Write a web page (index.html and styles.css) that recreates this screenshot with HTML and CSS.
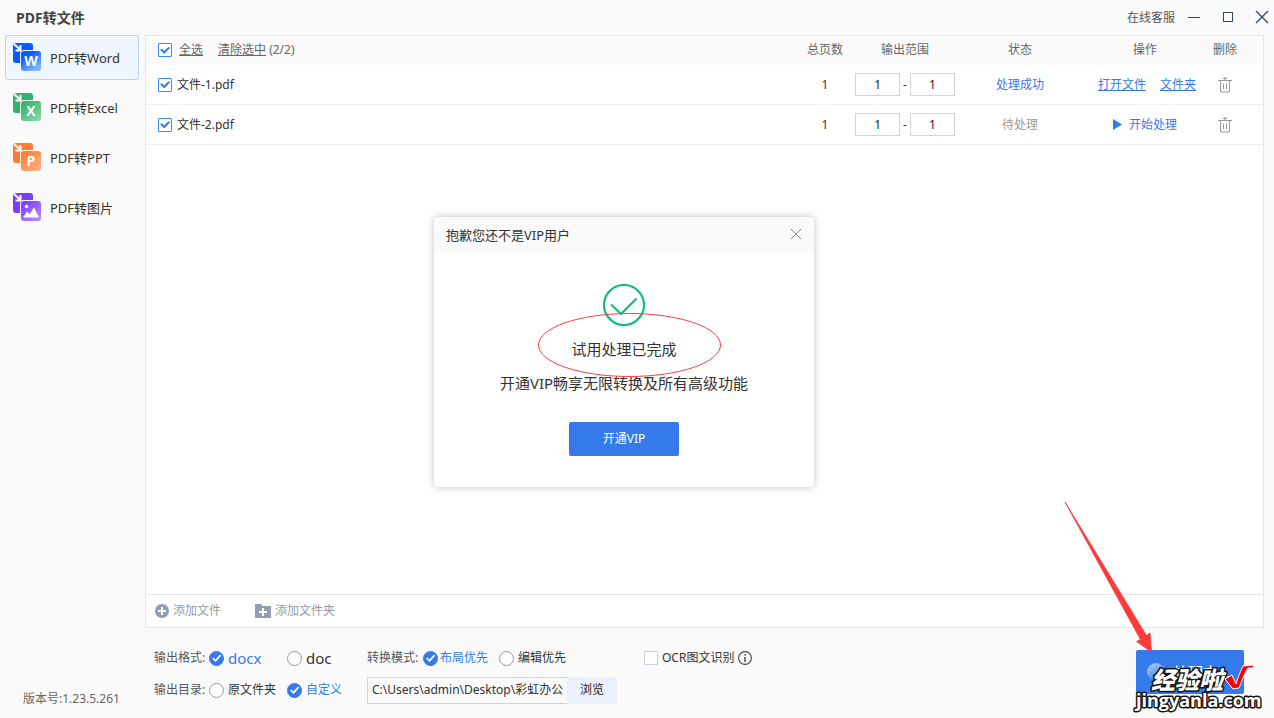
FILE: index.html
```html
<!DOCTYPE html>
<html lang="zh-CN">
<head>
<meta charset="utf-8">
<title>PDF转文件</title>
<link rel="stylesheet" href="styles.css">
</head>
<body>
<svg class="defs" width="0" height="0" aria-hidden="true">
  <defs>
    <linearGradient id="g-blue" x1="0" y1="0" x2="0.6" y2="1"><stop offset="0.3" stop-color="#0a5bff"/><stop offset="1" stop-color="#7fb2ff"/></linearGradient>
    <linearGradient id="g-green" x1="0" y1="0" x2="0.8" y2="1"><stop offset="0.1" stop-color="#2fb565"/><stop offset="1" stop-color="#86d3a4"/></linearGradient>
    <linearGradient id="g-orange" x1="0" y1="0" x2="0.8" y2="1"><stop offset="0.1" stop-color="#ff7a33"/><stop offset="1" stop-color="#ffb184"/></linearGradient>
    <linearGradient id="g-purple" x1="0" y1="0" x2="0.8" y2="1"><stop offset="0.1" stop-color="#7a3cff"/><stop offset="1" stop-color="#b48cff"/></linearGradient>
    <linearGradient id="g-spin" x1="0" y1="0" x2="0.6" y2="1"><stop offset="0" stop-color="#b8d2fb"/><stop offset="1" stop-color="#347aea"/></linearGradient>
    <symbol id="arrow-in" viewBox="0 0 28 28"><path d="M1 1l6 5.600M7.500 2v5.500H2.500" fill="none" stroke="#fff" stroke-width="2"/></symbol>
    <symbol id="trash" viewBox="0 0 14 16"><path d="M0 3.500h14M2.500 3.500v11.500h9V3.500M5.500 6.500v5.500M8.500 6.500v5.500M5 1.500h4M7 0v3" fill="none" stroke="#999" stroke-width="1"/></symbol>
  </defs>
</svg>

<header class="titlebar">
  <h1 class="titlebar-title">PDF转文件</h1>
  <a class="titlebar-link" href="#">在线客服</a>
  <div class="window-buttons">
    <button class="icon-button" type="button" aria-label="最小化"><svg width="14" height="14" viewBox="0 0 14 14"><path d="M1 6.500h12" stroke="#34405e"/></svg></button>
    <button class="icon-button" type="button" aria-label="最大化"><svg width="14" height="14" viewBox="0 0 14 14"><rect x="2.500" y="1.500" width="9" height="9" fill="none" stroke="#34405e"/></svg></button>
    <button class="icon-button" type="button" aria-label="关闭"><svg width="14" height="14" viewBox="0 0 14 14"><path d="M1 0l12 12M13 0L1 12" stroke="#34405e" stroke-width="1.300"/></svg></button>
  </div>
</header>

<div class="app">
  <nav class="sidebar">
    <button class="nav-item nav-item-active" type="button">
      <svg width="28" height="30" viewBox="0 0 28 30"><rect width="20" height="20" rx="3" fill="#0a5bff"/><use href="#arrow-in" width="28" height="28"/><rect x="7" y="7" width="22" height="22" rx="4" fill="#eff6ff"/><rect x="8" y="8" width="20" height="20" rx="3" fill="url(#g-blue)"/><text class="nav-letter" x="18" y="23">W</text></svg>
      <span>PDF转Word</span>
    </button>
    <button class="nav-item" type="button">
      <svg width="28" height="30" viewBox="0 0 28 30"><rect width="20" height="20" rx="3" fill="#2fb565"/><use href="#arrow-in" width="28" height="28"/><rect x="7" y="7" width="22" height="22" rx="4" fill="#fafafa"/><rect x="8" y="8" width="20" height="20" rx="3" fill="url(#g-green)"/><text class="nav-letter" x="18" y="23">X</text></svg>
      <span>PDF转Excel</span>
    </button>
    <button class="nav-item" type="button">
      <svg width="28" height="30" viewBox="0 0 28 30"><rect width="20" height="20" rx="3" fill="#ff7a33"/><use href="#arrow-in" width="28" height="28"/><rect x="7" y="7" width="22" height="22" rx="4" fill="#fafafa"/><rect x="8" y="8" width="20" height="20" rx="3" fill="url(#g-orange)"/><text class="nav-letter" x="18" y="23">P</text></svg>
      <span>PDF转PPT</span>
    </button>
    <button class="nav-item" type="button">
      <svg width="28" height="30" viewBox="0 0 28 30"><rect width="20" height="20" rx="3" fill="#7a3cff"/><use href="#arrow-in" width="28" height="28"/><rect x="7" y="7" width="22" height="22" rx="4" fill="#fafafa"/><rect x="8" y="8" width="20" height="20" rx="3" fill="url(#g-purple)"/><circle cx="13.500" cy="13.500" r="1.700" fill="#fff"/><path d="M10 24.500l4-6 2.700 2.700 4.300-6.700L26 24.500z" fill="#fff"/></svg>
      <span>PDF转图片</span>
    </button>
    <p class="version">版本号:1.23.5.261</p>
  </nav>

  <main class="content">
    <section class="panel">
      <table class="files">
        <colgroup><col><col class="col-pages"><col class="col-range"><col class="col-status"><col class="col-action"><col class="col-delete"></colgroup>
        <thead>
          <tr>
            <th class="cell-name">
              <div class="name-line name-line-head">
                <input class="tick" type="checkbox" id="all" checked>
                <label class="underlined" for="all">全选</label>
                <span class="clear"><a class="clear-link" href="#">清除选中</a> (2/2)</span>
              </div>
            </th>
            <th>总页数</th><th>输出范围</th><th>状态</th><th>操作</th><th class="cell-delete">删除</th>
          </tr>
        </thead>
        <tbody>
          <tr>
            <td class="cell-name"><div class="name-line"><input class="tick" type="checkbox" id="file1" checked><label for="file1">文件-1.pdf</label></div></td>
            <td>1</td>
            <td><div class="range"><input class="page-input" type="text" value="1" aria-label="起始页"><span>-</span><input class="page-input" type="text" value="1" aria-label="结束页"></div></td>
            <td class="status-done">处理成功</td>
            <td><div class="actions"><a class="action-link" href="#">打开文件</a><a class="action-link" href="#">文件夹</a></div></td>
            <td class="cell-delete"><button class="icon-button" type="button" aria-label="删除"><svg width="14" height="16"><use href="#trash"/></svg></button></td>
          </tr>
          <tr>
            <td class="cell-name"><div class="name-line"><input class="tick" type="checkbox" id="file2" checked><label for="file2">文件-2.pdf</label></div></td>
            <td>1</td>
            <td><div class="range"><input class="page-input" type="text" value="1" aria-label="起始页"><span>-</span><input class="page-input" type="text" value="1" aria-label="结束页"></div></td>
            <td class="status-wait">待处理</td>
            <td><button class="start" type="button"><svg width="9" height="11" viewBox="0 0 9 11"><path d="M0 0l9 5.500L0 11z" fill="#347aea"/></svg>开始处理</button></td>
            <td class="cell-delete"><button class="icon-button" type="button" aria-label="删除"><svg width="14" height="16"><use href="#trash"/></svg></button></td>
          </tr>
        </tbody>
      </table>
      <div class="add-bar">
        <button class="add-button" type="button"><svg width="14" height="14" viewBox="0 0 14 14"><circle cx="7" cy="7" r="7" fill="#959bb0"/><path d="M7 3v8M3 7h8" stroke="#fff" stroke-width="2"/></svg>添加文件</button>
        <button class="add-button" type="button"><svg width="16" height="14" viewBox="0 0 16 14"><path d="M0 0h6l1.500 2H16v12H0z" fill="#959bb0"/><path d="M8 4v8M4 8h8" stroke="#fff" stroke-width="2"/></svg>添加文件夹</button>
      </div>
    </section>

    <footer class="options">
      <div class="settings">
        <div class="group group-output" role="radiogroup" aria-label="输出格式">
          <span class="caption">输出格式:</span>
          <label class="choice choice-large"><input class="radio" type="radio" name="format" checked><span>docx</span></label>
          <label class="choice choice-large"><input class="radio" type="radio" name="format"><span>doc</span></label>
        </div>
        <div class="group group-mode" role="radiogroup" aria-label="转换模式">
          <span class="caption">转换模式:</span>
          <label class="choice choice-tight"><input class="radio" type="radio" name="mode" checked><span>布局优先</span></label>
          <label class="choice"><input class="radio" type="radio" name="mode"><span>编辑优先</span></label>
        </div>
        <div class="group group-ocr">
          <input class="tick" type="checkbox" id="ocr"><label for="ocr">OCR图文识别</label>
          <svg width="14" height="14" viewBox="0 0 14 14"><circle cx="7" cy="7" r="6.400" fill="none" stroke="#444" stroke-width="1.100"/><path d="M7 6v5M7 3v1.500" stroke="#444" stroke-width="1.400"/></svg>
        </div>
        <div class="group group-output" role="radiogroup" aria-label="输出目录">
          <span class="caption">输出目录:</span>
          <label class="choice"><input class="radio" type="radio" name="folder"><span>原文件夹</span></label>
          <label class="choice"><input class="radio" type="radio" name="folder" checked><span>自定义</span></label>
        </div>
        <div class="path">
          <input class="path-input" type="text" value="C:\Users\admin\Desktop\彩虹办公" aria-label="输出目录路径">
          <button class="browse" type="button">浏览</button>
        </div>
      </div>
      <button class="run" type="button"><svg width="18" height="18" viewBox="0 0 18 18"><circle cx="9" cy="9" r="9" fill="url(#g-spin)"/></svg>处理中...</button>
    </footer>
  </main>
</div>

<div class="dialog" role="dialog" aria-labelledby="dialog-title">
  <div class="dialog-head">
    <h2 class="dialog-title" id="dialog-title">抱歉您还不是VIP用户</h2>
    <button class="icon-button" type="button" aria-label="关闭"><svg width="12" height="12" viewBox="0 0 12 12"><path d="M1 0l10 10M11 0L1 10" stroke="#888"/></svg></button>
  </div>
  <div class="dialog-body">
    <svg width="42" height="42" viewBox="0 0 42 42"><circle cx="21" cy="21" r="20" fill="none" stroke="#14bd7f" stroke-width="2.200"/><path d="M8 20.500l10 9.500L33.500 14.500" fill="none" stroke="#14bd7f" stroke-width="2.200"/></svg>
    <p class="dialog-text">试用处理已完成</p>
    <p class="dialog-text">开通VIP畅享无限转换及所有高级功能</p>
    <button class="vip" type="button">开通VIP</button>
  </div>
  <svg class="ring" width="184" height="65" viewBox="0 0 184 65" aria-hidden="true"><ellipse cx="91.500" cy="32" rx="91" ry="31.500" fill="none" stroke="#f8403f"/></svg>
</div>

<svg class="pointer" width="90" height="152" viewBox="0 0 90 152" aria-hidden="true"><path d="M0 0L75.500 137.500 71.500 139.500 86.500 150 85 131 81.500 133.500z" fill="#fc3a3a" stroke="#fc3a3a" stroke-width="0.800"/></svg>

<svg class="watermark" width="134" height="56" viewBox="0 0 134 56">
  <text class="mark-name" x="20" y="27">经验啦</text>
  <path d="M94 17l7-4 4 9c2-7 5-14 7-18l11-1-1 3h-5c-4 6-6 13-9 20l-6 1z" fill="#f00" stroke="#fff" stroke-width="1"/>
  <text class="mark-site" x="5" y="45">jingyanla.com</text>
</svg>
</body>
</html>
```
FILE: styles.css
```css
* { box-sizing: border-box; }

body {
  margin: 0;
  height: 100vh;
  display: flex;
  flex-direction: column;
  position: relative;
  overflow: hidden;
  background: #fafafa;
  color: #333;
  font: 12px/20px "Noto Sans", "Noto Sans CJK SC", sans-serif;
}

button, input { font: inherit; color: inherit; margin: 0; }
button { border: 0; padding: 0; background: none; cursor: pointer; }
svg { display: block; flex: none; }
h1, h2, p { margin: 0; font-weight: normal; }
.defs { position: absolute; }

/* title bar */
.titlebar { height: 35px; flex: none; display: flex; align-items: center; padding-left: 16px; }
.titlebar-title { flex: 1; font-size: 14px; font-weight: bold; color: #444; }
.titlebar-link { color: #555; text-decoration: none; margin-right: 7px; }
.window-buttons { display: flex; gap: 10px; }
.icon-button { width: 24px; height: 24px; display: inline-flex; align-items: center; justify-content: center; vertical-align: middle; }

.app { flex: 1; display: flex; min-height: 0; }

/* sidebar */
.sidebar { width: 145px; flex: none; display: flex; flex-direction: column; gap: 5px; padding: 0 6px 9px 5px; }
.nav-item {
  height: 45px;
  display: flex;
  align-items: center;
  gap: 9px;
  padding: 0 7px;
  border: 1px solid transparent;
  border-radius: 2px;
  font-size: 13px;
}
.nav-item-active { background: #eff6ff; border-color: #b9d7fb; }
.nav-letter { fill: #fff; font: bold 14px "Open Sans", sans-serif; text-anchor: middle; }
.version { margin-top: auto; padding-left: 18px; color: #666; }

/* file list */
.content { flex: 1; min-width: 0; display: flex; flex-direction: column; padding-right: 10px; }
.panel { flex: 1; display: flex; flex-direction: column; background: #fff; border: 1px solid #e6e6e6; }
.files { width: 100%; table-layout: fixed; border-collapse: separate; border-spacing: 0; text-align: center; }
.col-pages { width: 50px; }
.col-range { width: 110px; }
.col-status { width: 120px; }
.col-action { width: 130px; }
.col-delete { width: 53px; }
.files th { height: 29px; padding: 0 0 1px; font-weight: normal; background: #fafafa; color: #666; white-space: nowrap; }
.files td { height: 40px; padding: 0; border-bottom: 1px solid #efefef; white-space: nowrap; }
.files .cell-name { text-align: left; padding-left: 12px; }
.files .cell-delete { padding-right: 23px; }
.files .icon-button { width: 30px; }
.name-line { display: flex; align-items: center; gap: 5px; }
.name-line-head { gap: 7px; }
.underlined { text-decoration: underline; }
.clear { margin-left: 8px; }
.clear-link { color: inherit; }
.range { display: flex; align-items: center; justify-content: center; gap: 3px; }
.page-input { width: 45px; height: 23px; padding: 0; border: 1px solid #d4d4d4; background: #fff; text-align: center; color: #222; }
.files .status-done { color: #347aea; }
.files .status-wait { color: #999; }
.actions { display: flex; justify-content: center; gap: 14px; padding-left: 4px; }
.action-link { color: #347aea; }
.start { display: inline-flex; align-items: center; gap: 7px; color: #347aea; vertical-align: middle; }

.tick {
  appearance: none;
  width: 14px;
  height: 14px;
  flex: none;
  border: 1px solid #c9cfe0;
  border-radius: 1px;
  background: #fff;
}
.tick:checked { border-color: #3d8bf5; }
.tick:checked::before {
  content: "";
  display: block;
  height: 12px;
  background: #347aea;
  clip-path: polygon(10% 48%, 23% 37%, 43% 58%, 80% 22%, 92% 34%, 43% 84%);
}

.add-bar { margin-top: auto; height: 33px; display: flex; align-items: center; gap: 34px; padding-left: 9px; border-top: 1px solid #e6e6e6; }
.add-button { display: flex; align-items: center; gap: 4px; color: #999; }

/* output options */
.options { flex: none; display: flex; align-items: flex-start; justify-content: space-between; padding: 14px 20px 12px 9px; }
.settings { display: grid; grid-template-columns: 213px 277px auto; grid-auto-rows: 32px; align-items: center; white-space: nowrap; }
.group { display: flex; align-items: center; }
.group-output { display: grid; grid-template-columns: 55px 78px auto; }
.group-mode { display: grid; grid-template-columns: 56px 76px auto; }
.group-ocr { gap: 4px; }
.caption { color: #555; }
.choice { display: flex; align-items: center; gap: 4px; }
.choice-large { font-size: 15px; }
.choice-tight { gap: 2px; }
.radio {
  appearance: none;
  width: 15px;
  height: 15px;
  flex: none;
  border: 1px solid #999;
  border-radius: 50%;
  background: #fff;
}
.radio:checked { border-color: #347aea; background: #347aea; }
.radio:checked::before {
  content: "";
  display: block;
  height: 13px;
  background: #fff;
  clip-path: polygon(16% 54%, 25% 46%, 42% 62%, 77% 24%, 86% 32%, 43% 80%);
}
.radio:checked + span { color: #347aea; }
.path { display: flex; width: 250px; height: 27px; }
.path-input { flex: 1; min-width: 0; padding: 0 0 0 4px; border: 1px solid #d4d4d4; border-right: 0; background: #fafafa; }
.browse { width: 50px; background: #eaf1fd; color: #222; }
.run {
  width: 108px;
  height: 44px;
  margin-top: 8px;
  display: flex;
  align-items: center;
  padding-left: 11px;
  gap: 8px;
  border-radius: 2px;
  background: #347aea;
  color: #fff;
  font-size: 15px;
}

/* dialog */
.dialog {
  position: absolute;
  left: calc(50% - 203px);
  top: 217px;
  width: 380px;
  border-radius: 4px;
  background: #fff;
  box-shadow: 0 0 8px rgba(0, 0, 0, 0.25);
}
.dialog-head { height: 35px; display: flex; align-items: center; justify-content: space-between; padding: 0 6px 0 12px; border-radius: 4px 4px 0 0; background: #fafafa; }
.dialog-title { font-size: 13px; }
.dialog-body { display: flex; flex-direction: column; align-items: center; padding: 32px 0 31px; }
.dialog-text { font-size: 15px; line-height: 24px; margin-top: 10px; }
.dialog-body svg + .dialog-text { margin-top: 11px; }
.vip { width: 110px; height: 34px; margin-top: 27px; border-radius: 2px; background: #347aea; color: #fff; }
.ring { position: absolute; left: 104px; top: 96px; }

/* overlays */
.pointer { position: absolute; right: 119px; bottom: 64px; overflow: visible; pointer-events: none; }
.watermark { position: absolute; right: 9px; bottom: 0; pointer-events: none; }
.watermark text { fill: #fff; stroke: #111; stroke-width: 3px; stroke-linejoin: round; paint-order: stroke; }
.mark-name { font: italic 900 24px "Noto Sans CJK SC", sans-serif; }
.mark-site { font: bold 18px "Open Sans", sans-serif; }
```
